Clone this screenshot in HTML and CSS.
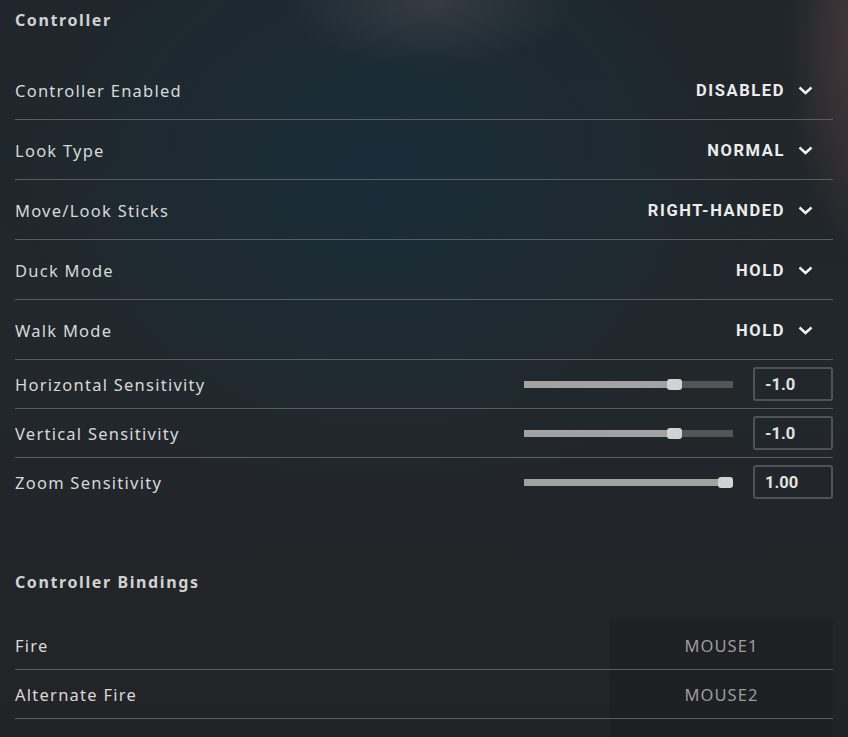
FILE: index.html
```html
<!DOCTYPE html>
<html>
<head>
<meta charset="utf-8">
<link rel="stylesheet" href="styles.css">
</head>
<body>
<div class="panel">
  <h2 class="heading first">Controller</h2>

  <div class="row drop">
    <span class="label">Controller Enabled</span>
    <span class="value">DISABLED<svg class="chev" viewBox="0 0 15 9"><path d="M1.5 1.5 L7.5 7 L13.5 1.5"/></svg></span>
  </div>
  <div class="row drop">
    <span class="label">Look Type</span>
    <span class="value">NORMAL<svg class="chev" viewBox="0 0 15 9"><path d="M1.5 1.5 L7.5 7 L13.5 1.5"/></svg></span>
  </div>
  <div class="row drop">
    <span class="label">Move/Look Sticks</span>
    <span class="value">RIGHT-HANDED<svg class="chev" viewBox="0 0 15 9"><path d="M1.5 1.5 L7.5 7 L13.5 1.5"/></svg></span>
  </div>
  <div class="row drop">
    <span class="label">Duck Mode</span>
    <span class="value">HOLD<svg class="chev" viewBox="0 0 15 9"><path d="M1.5 1.5 L7.5 7 L13.5 1.5"/></svg></span>
  </div>
  <div class="row drop">
    <span class="label">Walk Mode</span>
    <span class="value">HOLD<svg class="chev" viewBox="0 0 15 9"><path d="M1.5 1.5 L7.5 7 L13.5 1.5"/></svg></span>
  </div>

  <div class="row slide">
    <span class="label">Horizontal Sensitivity</span>
    <div class="control">
      <div class="track"><div class="fill" style="width:150px"></div><div class="thumb" style="left:143px"></div></div>
      <div class="box">-1.0</div>
    </div>
  </div>
  <div class="row slide">
    <span class="label">Vertical Sensitivity</span>
    <div class="control">
      <div class="track"><div class="fill" style="width:150px"></div><div class="thumb" style="left:143px"></div></div>
      <div class="box">-1.0</div>
    </div>
  </div>
  <div class="row slide last">
    <span class="label">Zoom Sensitivity</span>
    <div class="control">
      <div class="track"><div class="fill" style="width:209px"></div><div class="thumb" style="left:194px"></div></div>
      <div class="box">1.00</div>
    </div>
  </div>

  <h2 class="heading second">Controller Bindings</h2>

  <div class="row bind">
    <span class="label">Fire</span>
    <span class="key">MOUSE1</span>
  </div>
  <div class="row bind">
    <span class="label">Alternate Fire</span>
    <span class="key">MOUSE2</span>
  </div>
  <div class="row bind">
    <span class="label"></span>
    <span class="key"></span>
  </div>
</div>
</body>
</html>
```
FILE: styles.css
```css
html, body {
  margin: 0;
  padding: 0;
  height: 100%;
  overflow: hidden;
}
body {
  background:
    radial-gradient(ellipse 150px 70px at 430px 0px, rgba(70,72,78,0.6), rgba(70,72,78,0)),
    radial-gradient(ellipse 80px 220px at 868px 40px, rgba(90,66,66,0.75), rgba(90,66,66,0)),
    radial-gradient(ellipse 400px 330px at 380px 170px, rgba(22,48,62,0.7), rgba(22,48,62,0)),
    linear-gradient(180deg, #20262b 0%, #22272b 55%, #222326 100%);
  font-family: "Noto Sans", "DejaVu Sans", sans-serif;
  color: #d6d6d6;
}
.panel {
  width: 818px;
  padding-left: 15px;
  display: flex;
  flex-direction: column;
}
.heading {
  margin: 0;
  font-size: 16px;
  font-weight: 700;
  letter-spacing: 1.6px;
  line-height: 20px;
  color: #d2d2d2;
}
.heading.first {
  padding-top: 10px;
  height: 50px;
}
.heading.second {
  padding-top: 65px;
  height: 49px;
}
.row {
  display: flex;
  align-items: center;
  justify-content: space-between;
  border-bottom: 1px solid #5b5e61;
}
.row.drop { height: 59px; }
.row.slide { height: 48px; }
.row.slide.last { border-bottom-color: transparent; }
.row.bind { height: 48px; align-items: stretch; }
.label {
  font-size: 16.5px;
  letter-spacing: 1.25px;
  color: #d8d8d8;
  display: flex;
  align-items: center;
  padding-top: 1px;
}
.value {
  display: flex;
  align-items: center;
  font-family: Roboto, "Liberation Sans", sans-serif;
  font-weight: 700;
  font-size: 16.5px;
  letter-spacing: 1.6px;
  color: #ececec;
  margin-right: 20px;
  padding-top: 1px;
}
.chev {
  width: 15px;
  height: 9px;
  margin-left: 13px;
  fill: none;
  stroke: #f2f2f2;
  stroke-width: 2.4;
}
.control {
  display: flex;
  align-items: center;
}
.track {
  position: relative;
  width: 209px;
  height: 7px;
  background: #535557;
  margin-right: 20px;
}
.fill {
  height: 100%;
  background: #a2a2a2;
}
.thumb {
  position: absolute;
  top: -2px;
  width: 15px;
  height: 11px;
  border-radius: 3px;
  background: #d2d2d2;
}
.box {
  box-sizing: border-box;
  width: 80px;
  height: 34px;
  border: 2px solid #505356;
  border-radius: 3px;
  padding-left: 10px;
  display: flex;
  align-items: center;
  font-family: Roboto, "Liberation Sans", sans-serif;
  font-weight: 700;
  font-size: 16.5px;
  color: #e2e2e2;
}
.key {
  width: 223px;
  background: rgba(0,0,0,0.09);
  display: flex;
  align-items: center;
  justify-content: center;
  font-size: 16.5px;
  letter-spacing: 1.1px;
  color: #9c9c9c;
  padding-top: 1px;
}
```
